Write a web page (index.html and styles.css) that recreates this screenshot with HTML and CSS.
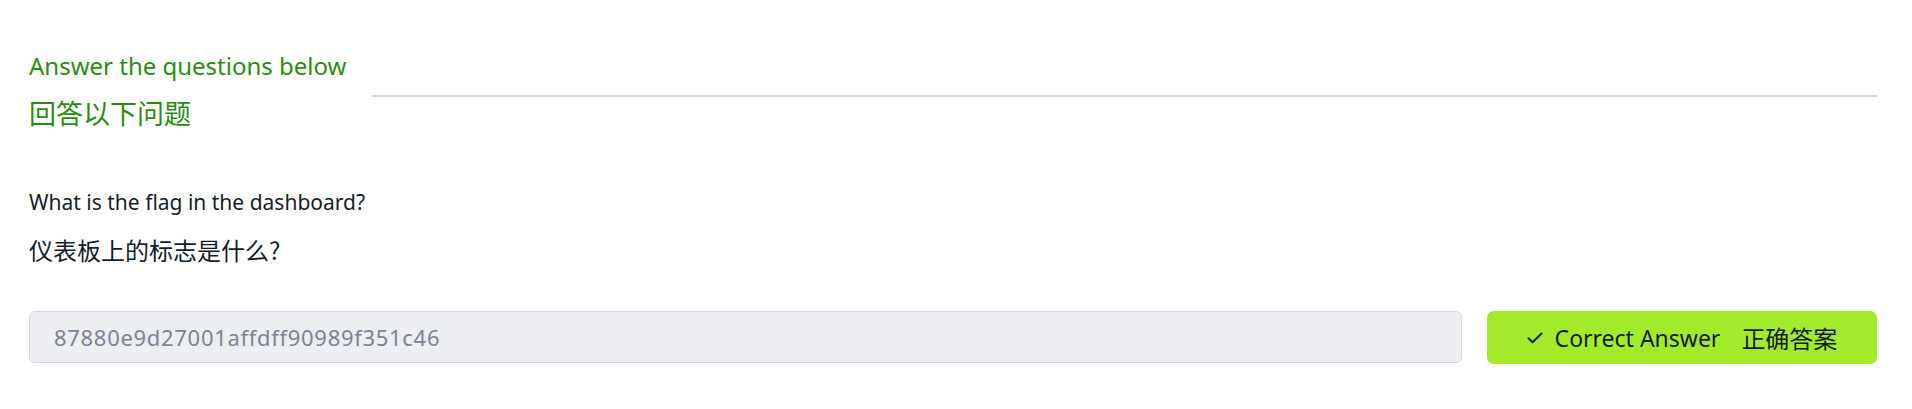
FILE: index.html
```html
<!DOCTYPE html>
<html lang="en">
<head>
<meta charset="utf-8">
<title>Task</title>
<link rel="stylesheet" href="styles.css">
</head>
<body>
<main class="task">
  <header class="task-header">
    <div class="task-title">
      <div class="title-en">Answer the questions below</div>
      <div class="title-zh">回答以下问题</div>
    </div>
    <div class="rule"></div>
  </header>
  <section class="question">
    <p class="q-en">What is the flag in the dashboard?</p>
    <p class="q-zh">仪表板上的标志是什么?</p>
  </section>
  <div class="answer-row">
    <div class="answer-input">87880e9d27001affdff90989f351c46</div>
    <button class="answer-btn" type="button">
      <svg class="check" width="16" height="12" viewBox="0 0 16 12" aria-hidden="true"><path d="M1.5 6.2 L5.6 10.2 L14.5 1.5" fill="none" stroke="#151c2b" stroke-width="2" stroke-linecap="round" stroke-linejoin="round"/></svg>
      <span class="btn-en">Correct Answer</span>
      <span class="btn-zh">正确答案</span>
    </button>
  </div>
</main>
</body>
</html>
```
FILE: styles.css
```css
html, body {
  margin: 0;
  padding: 0;
  background: #ffffff;
}
body {
  font-family: "Noto Sans", "Noto Sans CJK SC", sans-serif;
  color: #151c2b;
}
.task {
  padding: 49px 35px 0 29px;
}
.task-header {
  display: flex;
  align-items: center;
  gap: 26px;
}
.task-title {
  color: #2b8c12;
}
.title-en {
  font-size: 24px;
  line-height: 34px;
}
.title-zh {
  font-family: "Noto Sans CJK SC", sans-serif;
  font-size: 27px;
  line-height: 40px;
  margin-top: 10px;
}
.rule {
  flex: 1;
  height: 2px;
  background: #d2d6dd;
  margin-top: 9px;
}
.question {
  margin-top: 54px;
}
.q-en {
  margin: 0;
  font-size: 21px;
  line-height: 30px;
}
.q-zh {
  margin: 16px 0 0;
  font-family: "Noto Sans CJK SC", sans-serif;
  font-size: 24px;
  line-height: 34px;
}
.answer-row {
  display: flex;
  gap: 25px;
  margin-top: 44px;
}
.answer-input {
  flex: 1;
  box-sizing: border-box;
  height: 52px;
  border: 1px solid #d3d7de;
  border-radius: 6px;
  background: #eceef2;
  color: #7d8594;
  font-size: 22px;
  letter-spacing: 0.7px;
  display: flex;
  align-items: center;
  padding: 0 24px;
}
.answer-btn {
  width: 390px;
  height: 53px;
  border: none;
  border-radius: 7px;
  background: #a3ea2a;
  color: #151c2b;
  display: flex;
  align-items: center;
  justify-content: center;
  font-family: "Noto Sans", "Noto Sans CJK SC", sans-serif;
  font-size: 23px;
  padding: 0;
  cursor: pointer;
}
.check {
  margin-right: 12px;
}
.btn-zh {
  font-family: "Noto Sans CJK SC", sans-serif;
  font-size: 24px;
  margin-left: 21px;
}
```
